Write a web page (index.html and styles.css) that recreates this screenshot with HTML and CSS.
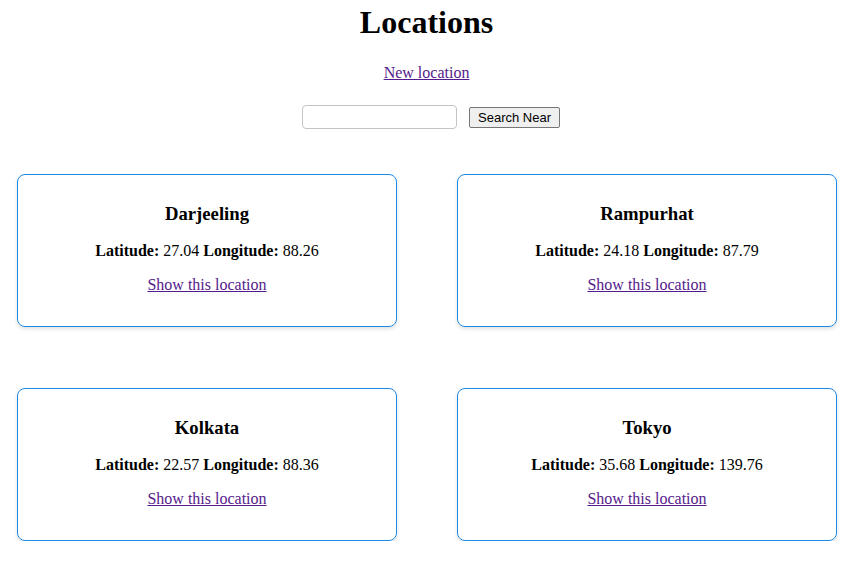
FILE: index.html
```html
<!DOCTYPE html>
<html>
<head>
<meta charset="utf-8">
<title>Locations</title>
<link rel="stylesheet" href="styles.css">
</head>
<body>
<h1 class="title">Locations</h1>
<p class="new"><a href="#" class="link">New location</a></p>
<form class="search">
  <input type="text" class="search-input">
  <button type="button" class="search-btn">Search Near</button>
</form>
<div class="grid">
  <div class="card">
    <h3 class="card-title">Darjeeling</h3>
    <p class="coords"><strong>Latitude:</strong> 27.04 <strong>Longitude:</strong> 88.26</p>
    <p class="show"><a href="#" class="link">Show this location</a></p>
  </div>
  <div class="card">
    <h3 class="card-title">Rampurhat</h3>
    <p class="coords"><strong>Latitude:</strong> 24.18 <strong>Longitude:</strong> 87.79</p>
    <p class="show"><a href="#" class="link">Show this location</a></p>
  </div>
  <div class="card">
    <h3 class="card-title">Kolkata</h3>
    <p class="coords"><strong>Latitude:</strong> 22.57 <strong>Longitude:</strong> 88.36</p>
    <p class="show"><a href="#" class="link">Show this location</a></p>
  </div>
  <div class="card">
    <h3 class="card-title">Tokyo</h3>
    <p class="coords"><strong>Latitude:</strong> 35.68 <strong>Longitude:</strong> 139.76</p>
    <p class="show"><a href="#" class="link">Show this location</a></p>
  </div>
</div>
</body>
</html>
```

FILE: styles.css
```css
html, body {
  margin: 0;
  padding: 0;
  background: #fff;
}
body {
  font-family: "Liberation Serif", "Times New Roman", serif;
  font-size: 16px;
  color: #000;
  text-align: center;
}
.title {
  font-size: 32px;
  font-weight: bold;
  margin: 4px 0 23px;
}
.new {
  margin: 0;
}
.link {
  color: #551a8b;
  text-decoration: underline;
}
.search {
  display: flex;
  justify-content: center;
  align-items: center;
  gap: 12px;
  margin-top: 23px;
  padding-left: 9px;
}
.search-input {
  box-sizing: border-box;
  width: 155px;
  height: 24px;
  border: 1px solid #c4c4c4;
  border-radius: 4px;
  padding: 0 4px;
  margin: 0;
  background: #fff;
}
.search-btn {
  box-sizing: border-box;
  width: 91px;
  height: 21px;
  font-family: "Liberation Sans", Arial, sans-serif;
  font-size: 13px;
  color: #000;
  background: #efefef;
  border: 1px solid #767676;
  border-radius: 2px;
  padding: 0 6px;
  margin: 0;
}
.grid {
  display: grid;
  grid-template-columns: 380px 380px;
  column-gap: 60px;
  row-gap: 61px;
  justify-content: center;
  margin-top: 45px;
  padding-left: 1px;
}
.card {
  border: 1px solid #1e88e5;
  border-radius: 8px;
  box-shadow: 0 2px 4px rgba(0, 0, 0, 0.12);
  padding: 8px 16px 16px;
}
.card-title {
  font-size: 18.72px;
  font-weight: bold;
  margin: 20px 0 17px;
}
.coords {
  margin: 0 0 16px;
}
.show {
  margin: 0 0 16px;
}
```
